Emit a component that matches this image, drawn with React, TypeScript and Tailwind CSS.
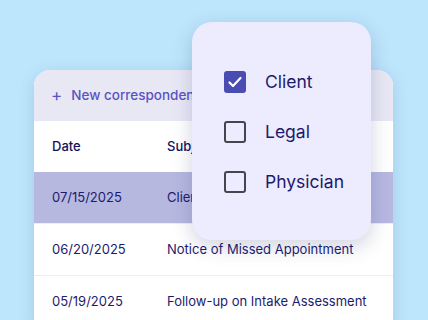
import React from "react";

const rows = [
  { date: "07/15/2025", subject: "Client Intake Confirmation", active: true },
  { date: "06/20/2025", subject: "Notice of Missed Appointment" },
  { date: "05/19/2025", subject: "Follow-up on Intake Assessment" },
];

function Check({ checked }: { checked?: boolean }) {
  return checked ? (
    <div className="w-[22px] h-[22px] rounded-[3px] bg-[#4a4cb2] flex items-center justify-center">
      <svg width="16" height="16" viewBox="0 0 16 16" fill="none">
        <path d="M2.5 8.5l3.5 3.5 7.5-8" stroke="white" strokeWidth="2.2" strokeLinecap="round" strokeLinejoin="round" />
      </svg>
    </div>
  ) : (
    <div className="w-[22px] h-[22px] rounded-[3px] border-2 border-[#45454f]" />
  );
}

export default function App() {
  return (
    <div
      className="relative w-[428px] h-[320px] overflow-hidden bg-[#bde6fc]"
      style={{ fontFamily: "Inter, 'Noto Sans', sans-serif" }}
    >
      <div className="ml-[34px] mt-[70px] w-[359px] rounded-t-[16px] overflow-hidden bg-white shadow-[0_4px_16px_rgba(60,80,140,0.18)]">
        <div className="h-[51px] bg-[#e8e8f5] flex items-center pl-[17px] pr-[18px] gap-[9px] text-[13.5px] font-medium text-[#5b52c4]">
          <span className="text-[17px] leading-none font-normal">+</span>
          <span>New correspondence</span>
        </div>
        <div className="h-[51px] flex items-center px-[18px] text-[13px] font-medium text-[#12125a]">
          <div className="w-[115px]">Date</div>
          <div>Subject</div>
        </div>
        {rows.map((r) => (
          <div
            key={r.date}
            className={`h-[52px] flex items-center px-[18px] text-[13px] text-[#1d1b6e] border-b border-[#ececf2] ${
              r.active ? "bg-[#b6b8e0]" : "bg-white"
            }`}
          >
            <div className="w-[115px]">{r.date}</div>
            <div>{r.subject}</div>
          </div>
        ))}
      </div>

      <div className="absolute left-[192px] top-[22px] w-[179px] h-[218px] rounded-[20px] bg-[#edebfe] shadow-[0_6px_20px_rgba(40,50,110,0.22)] flex flex-col pt-[49px] pl-[32px] gap-[28px]">
        {[
          { label: "Client", checked: true },
          { label: "Legal" },
          { label: "Physician" },
        ].map((o) => (
          <div key={o.label} className="flex items-center gap-[19px] h-[22px]">
            <Check checked={o.checked} />
            <span className="text-[17.5px] text-[#1c1a6a]">{o.label}</span>
          </div>
        ))}
      </div>
    </div>
  );
}
